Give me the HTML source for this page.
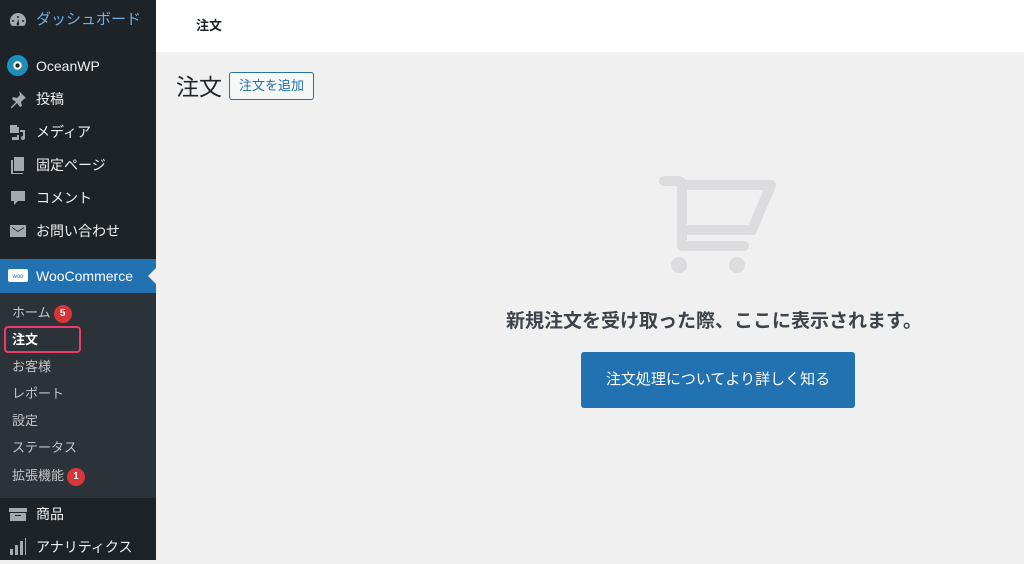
<!DOCTYPE html>
<html><head><meta charset="utf-8"><style>
*{margin:0;padding:0;box-sizing:border-box}
body{width:1024px;height:560px;overflow:hidden;background:#f0f0f1;font-family:"Liberation Sans","Noto Sans CJK JP",sans-serif;position:relative}
#side{position:absolute;left:0;top:0;width:156px;height:560px;background:#1d2327}
.mi{position:absolute;left:0;width:156px;height:34px;color:#f0f0f1;font-size:14px;line-height:34px;padding-left:36px}
.ic{position:absolute;left:8px;top:7px;width:20px;height:20px}
#sub{position:absolute;left:0;top:293px;width:156px;height:205px;background:#2c3338}
.si{position:absolute;left:12px;font-size:13px;color:#c3c4c7;line-height:20px}
.bd{display:inline-block;width:18px;height:18px;border-radius:9px;background:#d63638;color:#fff;font-size:10px;line-height:18px;text-align:center;vertical-align:1px;margin-left:3px;font-weight:bold}
#top{position:absolute;left:156px;top:0;width:868px;height:52px;background:#fff}
</style></head><body>
<div id="side">
<div class="mi" style="top:3px;color:#72aee6;font-size:15px"><svg class="ic" viewBox="0 0 20 20"><path fill="#a7aaad" d="M10 3a8 8 0 0 0-8 8c0 2 .7 3.6 1.8 4.9h12.4A8 8 0 0 0 18 11a8 8 0 0 0-8-8zm0 3a1 1 0 1 1 0 2 1 1 0 0 1 0-2zM5 10a1 1 0 1 1 0 2 1 1 0 0 1 0-2zm10 0a1 1 0 1 1 0 2 1 1 0 0 1 0-2zm-5 5.5a1.5 1.5 0 0 1-1-2.6L10.5 9l.5 4.5a1.5 1.5 0 0 1-1 2z"/></svg>ダッシュボード</div>
<div class="mi" style="top:49px"><svg class="ic" viewBox="0 0 20 20" style="left:7px;width:21px;height:21px;top:6px"><circle cx="10" cy="10" r="10" fill="#13aff0" opacity=".8"/><circle cx="10" cy="10" r="7" fill="#2c89ad"/><circle cx="10" cy="10" r="4" fill="#fff"/><circle cx="10" cy="10" r="2" fill="#1d2327"/></svg>OceanWP</div>
<div class="mi" style="top:82px"><svg class="ic" viewBox="0 0 20 20"><path fill="#a7aaad" d="M11 2l7 7-2 1-3 3 1 4-2 1-3-4-5 5H3v-1l5-5-4-3 1-2 4 1 3-3z"/></svg>投稿</div>
<div class="mi" style="top:115px"><svg class="ic" viewBox="0 0 20 20"><path fill="#a7aaad" d="M2 3h7v2h2v6H2zM12 8h5v8a2 2 0 1 1-2-2V10h-3zM9 13h2v5H4v-3h5z"/></svg>メディア</div>
<div class="mi" style="top:148px"><svg class="ic" viewBox="0 0 20 20"><path fill="#a7aaad" d="M6 2h10v14H6zM3 5h2v13h10v1H3z"/></svg>固定ページ</div>
<div class="mi" style="top:181px"><svg class="ic" viewBox="0 0 20 20"><path fill="#a7aaad" d="M3 3h14v10h-7l-4 4v-4H3z"/></svg>コメント</div>
<div class="mi" style="top:214px"><svg class="ic" viewBox="0 0 20 20"><path fill="#a7aaad" d="M2 4h16v12H2zm2 2v1l6 4 6-4V6l-6 4z"/></svg>お問い合わせ</div>
<div class="mi" style="top:259px;background:#2271b1;color:#fff"><svg class="ic" viewBox="0 0 20 20"><rect x="0" y="3" width="20" height="13" rx="2" fill="#fff"/><text x="10" y="12" font-size="6" text-anchor="middle" fill="#2271b1" font-family="Liberation Sans">woo</text></svg>WooCommerce<div style="position:absolute;right:0;top:9px;border:8px solid transparent;border-right-color:#f0f0f1"></div></div>
<div id="sub">
<div class="si" style="top:10px">ホーム<span class="bd">5</span></div>
<div class="si" style="top:37px;color:#fff;font-weight:bold">注文</div>
<div style="position:absolute;left:4px;top:33px;width:77px;height:27px;border:2px solid #f0386b;border-radius:4px"></div>
<div class="si" style="top:64px">お客様</div>
<div class="si" style="top:91px">レポート</div>
<div class="si" style="top:118px">設定</div>
<div class="si" style="top:145px">ステータス</div>
<div class="si" style="top:173px">拡張機能<span class="bd">1</span></div>
</div>
<div class="mi" style="top:497px"><svg class="ic" viewBox="0 0 20 20"><path fill="#a7aaad" d="M1 4h18v4H1zM2 9h16v8H2zm5 2v1h6v-1z"/></svg>商品</div>
<div class="mi" style="top:530px"><svg class="ic" viewBox="0 0 20 20"><path fill="#a7aaad" d="M2 12h3v6H2zM7 8h3v10H7zM12 4h3v14h-3zM17 1h1v17h-1z"/></svg>アナリティクス</div>
</div>
<div id="top"><div style="position:absolute;left:40px;top:15px;font-size:13px;font-weight:bold;color:#1d2327">注文</div></div>
<div style="position:absolute;left:176px;top:68px;font-size:23px;color:#1d2327">注文</div>
<div style="position:absolute;left:229px;top:72px;width:85px;height:28px;border:1px solid #2271b1;border-radius:3px;background:#f6f7f7;color:#2271b1;font-size:13px;line-height:26px;text-align:center">注文を追加</div>
<svg style="position:absolute;left:650px;top:168px" width="140" height="110" viewBox="650 168 140 110">
<g fill="none" stroke="#dcdcde" stroke-width="10" stroke-linecap="round" stroke-linejoin="round">
<path d="M664 181h14a4 4 0 0 1 4 4v61h62"/>
<path d="M682 185h89l-19 45h-70"/>
</g>
<circle cx="679" cy="265" r="8" fill="#dcdcde"/><circle cx="737" cy="265" r="8" fill="#dcdcde"/>
</svg>
<div style="position:absolute;left:464px;top:306px;width:500px;text-align:center;font-size:19px;font-weight:bold;color:#3c434a">新規注文を受け取った際、ここに表示されます。</div>
<div style="position:absolute;left:581px;top:352px;width:274px;height:56px;background:#2271b1;border-radius:3px;color:#fff;font-size:15px;line-height:56px;text-align:center">注文処理についてより詳しく知る</div>
</body></html>
